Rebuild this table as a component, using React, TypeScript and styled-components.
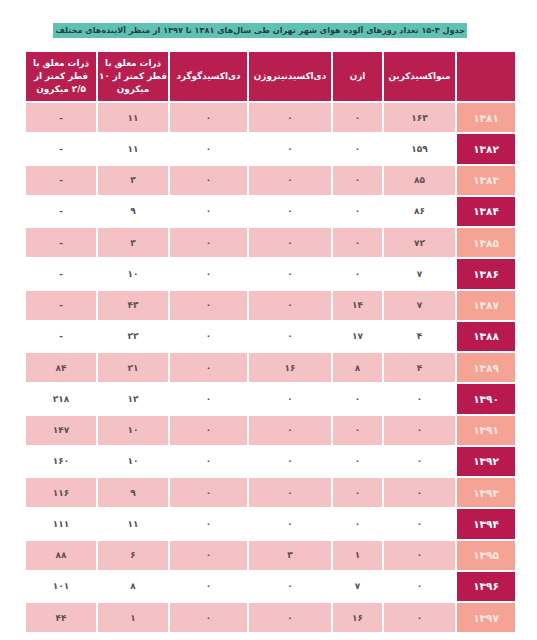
import React from 'react';
import styled, { createGlobalStyle } from 'styled-components';

const GlobalStyles = createGlobalStyle`
  html, body {
    margin: 0;
    padding: 0;
    background: #ffffff;
  }
  body {
    font-family: "DejaVu Sans", "Noto Sans", sans-serif;
  }
`;

const Page = styled.div`
  width: 537px;
  height: 640px;
  padding: 23px 22px 0 26px;
  box-sizing: border-box;
  direction: rtl;
`;

const CaptionRow = styled.div`
  display: flex;
  justify-content: flex-start;
  padding-right: 48px;
  height: 29px;
`;

const Caption = styled.div`
  background: #5fc0b4;
  color: #24403d;
  font-size: 8.1px;
  font-weight: bold;
  line-height: 15px;
  height: 15px;
  padding: 0 2px;
  white-space: nowrap;
`;

const Grid = styled.div`
  display: grid;
  grid-template-columns: 58px 71px 49px 82px 77px 70px 70px;
  grid-template-rows: 49px;
  grid-auto-rows: 29.25px;
  gap: 2px;
`;

const HeadCell = styled.div`
  background: #b81f50;
  color: #ffffff;
  font-size: 8.8px;
  font-weight: bold;
  line-height: 13px;
  display: flex;
  align-items: center;
  justify-content: center;
  text-align: center;
  padding: 0 2px;
  white-space: nowrap;
`;

const YearCell = styled.div<{ $shade: boolean }>`
  background: ${(p) => (p.$shade ? '#f4a394' : '#b8194f')};
  color: ${(p) => (p.$shade ? '#fde9e4' : '#ffffff')};
  font-size: 10.5px;
  font-weight: bold;
  display: flex;
  align-items: center;
  justify-content: center;
`;

const DataCell = styled.div<{ $shade: boolean }>`
  background: ${(p) => (p.$shade ? '#f4c1c5' : '#ffffff')};
  color: #5e5054;
  font-size: 9px;
  font-weight: bold;
  display: flex;
  align-items: center;
  justify-content: center;
`;

const headers: string[][] = [
  [''],
  ['منواکسیدکربن'],
  ['ازن'],
  ['دی‌اکسیدنیتروژن'],
  ['دی‌اکسیدگوگرد'],
  ['ذرات معلق با', 'قطر کمتر از ۱۰', 'میکرون'],
  ['ذرات معلق با', 'قطر کمتر از', '۲/۵ میکرون'],
];

const rows: string[][] = [
  ['۱۳۸۱', '۱۶۳', '۰', '۰', '۰', '۱۱', '-'],
  ['۱۳۸۲', '۱۵۹', '۰', '۰', '۰', '۱۱', '-'],
  ['۱۳۸۳', '۸۵', '۰', '۰', '۰', '۳', '-'],
  ['۱۳۸۴', '۸۶', '۰', '۰', '۰', '۹', '-'],
  ['۱۳۸۵', '۷۲', '۰', '۰', '۰', '۳', '-'],
  ['۱۳۸۶', '۷', '۰', '۰', '۰', '۱۰', '-'],
  ['۱۳۸۷', '۷', '۱۴', '۰', '۰', '۴۳', '-'],
  ['۱۳۸۸', '۴', '۱۷', '۰', '۰', '۲۲', '-'],
  ['۱۳۸۹', '۴', '۸', '۱۶', '۰', '۲۱', '۸۴'],
  ['۱۳۹۰', '۰', '۰', '۰', '۰', '۱۲', '۲۱۸'],
  ['۱۳۹۱', '۰', '۰', '۰', '۰', '۱۰', '۱۴۷'],
  ['۱۳۹۲', '۰', '۰', '۰', '۰', '۱۰', '۱۶۰'],
  ['۱۳۹۳', '۰', '۰', '۰', '۰', '۹', '۱۱۶'],
  ['۱۳۹۴', '۰', '۰', '۰', '۰', '۱۱', '۱۱۱'],
  ['۱۳۹۵', '۰', '۱', '۳', '۰', '۶', '۸۸'],
  ['۱۳۹۶', '۰', '۷', '۰', '۰', '۸', '۱۰۱'],
  ['۱۳۹۷', '۰', '۱۶', '۰', '۰', '۱', '۴۴'],
];

const App: React.FC = () => {
  return (
    <>
      <GlobalStyles />
      <Page>
        <CaptionRow>
          <Caption>
            جدول ۳-۱۵ تعداد روزهای آلوده هوای شهر تهران طی سال‌های ۱۳۸۱ تا ۱۳۹۷ از منظر آلاینده‌های مختلف
          </Caption>
        </CaptionRow>
        <Grid>
          {headers.map((lines, i) => (
            <HeadCell key={'h' + i}>
              <div>
                {lines.map((l, j) => (
                  <div key={j}>{l}</div>
                ))}
              </div>
            </HeadCell>
          ))}
          {rows.map((row, r) => {
            const shade = r % 2 === 0;
            return row.map((v, c) =>
              c === 0 ? (
                <YearCell key={r + '-' + c} $shade={shade}>{v}</YearCell>
              ) : (
                <DataCell key={r + '-' + c} $shade={shade}>{v}</DataCell>
              )
            );
          })}
        </Grid>
      </Page>
    </>
  );
};

export default App;
